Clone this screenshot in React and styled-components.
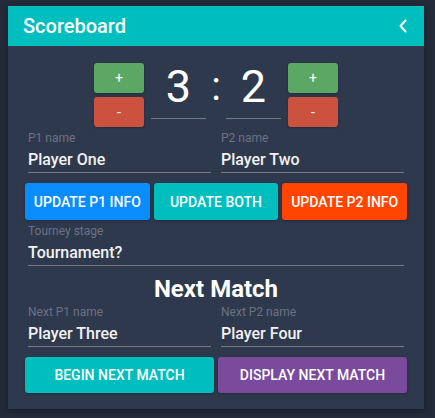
import React from 'react';
import styled, { createGlobalStyle } from 'styled-components';

const GlobalStyle = createGlobalStyle`
  body {
    margin: 0;
    background: #232a39;
    font-family: Roboto, "Liberation Sans", sans-serif;
    color: #f2f2f2;
  }
  * {
    box-sizing: border-box;
  }
`;

export default function App() {
  return (
    <>
      <GlobalStyle />
      <Page>
        <Card>
          <Header>
            <Title>Scoreboard</Title>
            <svg width="10" height="14" viewBox="0 0 10 14">
              <path d="M7.5 1.5 2.5 7l5 5.5" fill="none" stroke="#fff" strokeWidth="2" strokeLinecap="round" strokeLinejoin="round" />
            </svg>
          </Header>
          <Body>
            <ScoreRow>
              <Stack>
                <SmallButton color="#5ba865">+</SmallButton>
                <SmallButton color="#cb523f">-</SmallButton>
              </Stack>
              <Score>3</Score>
              <Colon>:</Colon>
              <Score>2</Score>
              <Stack>
                <SmallButton color="#5ba865">+</SmallButton>
                <SmallButton color="#cb523f">-</SmallButton>
              </Stack>
            </ScoreRow>

            <Fields>
              <Field>
                <Label>P1 name</Label>
                <Input defaultValue="Player One" />
              </Field>
              <Field>
                <Label>P2 name</Label>
                <Input defaultValue="Player Two" />
              </Field>
            </Fields>

            <ButtonRow cols={3}>
              <ActionButton color="#0a8cfd">Update P1 info</ActionButton>
              <ActionButton color="#00bebe">Update both</ActionButton>
              <ActionButton color="#ff4500">Update P2 info</ActionButton>
            </ButtonRow>

            <Fields single>
              <Field>
                <Label>Tourney stage</Label>
                <Input defaultValue="Tournament?" />
              </Field>
            </Fields>

            <Heading>Next Match</Heading>

            <Fields>
              <Field>
                <Label>Next P1 name</Label>
                <Input defaultValue="Player Three" />
              </Field>
              <Field>
                <Label>Next P2 name</Label>
                <Input defaultValue="Player Four" />
              </Field>
            </Fields>

            <ButtonRow cols={2} short>
              <ActionButton color="#00bebe">Begin next match</ActionButton>
              <ActionButton color="#7a4a9d">Display next match</ActionButton>
            </ButtonRow>
          </Body>
        </Card>
      </Page>
    </>
  );
}

const Page = styled.div`
  padding: 6px 8px;
`;

const Card = styled.div`
  width: 416px;
  background: #2f394d;
  box-shadow: 0 2px 6px rgba(0, 0, 0, 0.3);
`;

const Header = styled.div`
  height: 40px;
  background: #00bebe;
  display: flex;
  align-items: center;
  justify-content: space-between;
  padding: 0 16px 0 15px;
`;

const Title = styled.div`
  font-size: 20px;
  font-weight: 500;
  line-height: 24px;
  color: #fff;
`;

const Body = styled.div`
  padding: 17px 17px 16px;
  display: flex;
  flex-direction: column;
`;

const ScoreRow = styled.div`
  display: flex;
  justify-content: center;
  align-items: flex-start;
`;

const Stack = styled.div`
  display: flex;
  flex-direction: column;
  gap: 4px;
  margin: 0 7px;
`;

const SmallButton = styled.button`
  width: 50px;
  height: 30px;
  border: none;
  border-radius: 3px;
  background: ${props => props.color};
  color: #fff;
  font-family: inherit;
  font-size: 14px;
  padding: 0;
  box-shadow: 0 1px 3px rgba(0, 0, 0, 0.25);
`;

const Score = styled.div`
  width: 55px;
  height: 56px;
  padding-top: 1px;
  border-bottom: 1px solid #767b86;
  font-size: 45px;
  font-weight: 400;
  line-height: 46px;
  text-align: center;
  color: #fff;
`;

const Colon = styled.div`
  width: 20px;
  padding-top: 1px;
  font-size: 40px;
  font-weight: 400;
  line-height: 46px;
  text-align: center;
  color: #fff;
`;

const Fields = styled.div`
  display: grid;
  grid-template-columns: ${props => (props.single ? '1fr' : '1fr 1fr')};
  gap: 10px;
  padding: 0 3px;
  margin-top: 4px;
`;

const Field = styled.div`
  display: flex;
  flex-direction: column;
  min-width: 0;
`;

const Label = styled.label`
  font-size: 12px;
  line-height: 14px;
  color: #6a7283;
  margin-bottom: 2px;
`;

const Input = styled.input`
  width: 100%;
  height: 26px;
  padding: 0 0 1px;
  border: none;
  border-bottom: 1px solid #767b86;
  background: transparent;
  color: #f2f2f2;
  font-family: inherit;
  font-size: 16px;
  font-weight: 500;
  line-height: 24px;
  outline: none;
`;

const ButtonRow = styled.div`
  display: grid;
  grid-template-columns: repeat(${props => props.cols}, 1fr);
  gap: 4px;
  margin-top: 10px;

  & > button {
    height: ${props => (props.short ? '36px' : '37px')};
  }
`;

const ActionButton = styled.button`
  border: none;
  border-radius: 3px;
  background: ${props => props.color};
  color: #fff;
  font-family: inherit;
  font-size: 14px;
  font-weight: 500;
  text-transform: uppercase;
  padding: 0;
  box-shadow: 0 1px 3px rgba(0, 0, 0, 0.25);
`;

const Heading = styled.div`
  font-size: 24px;
  font-weight: 700;
  line-height: 28px;
  text-align: center;
  color: #fff;
  margin-top: 9px;
  margin-bottom: -2px;
`;
